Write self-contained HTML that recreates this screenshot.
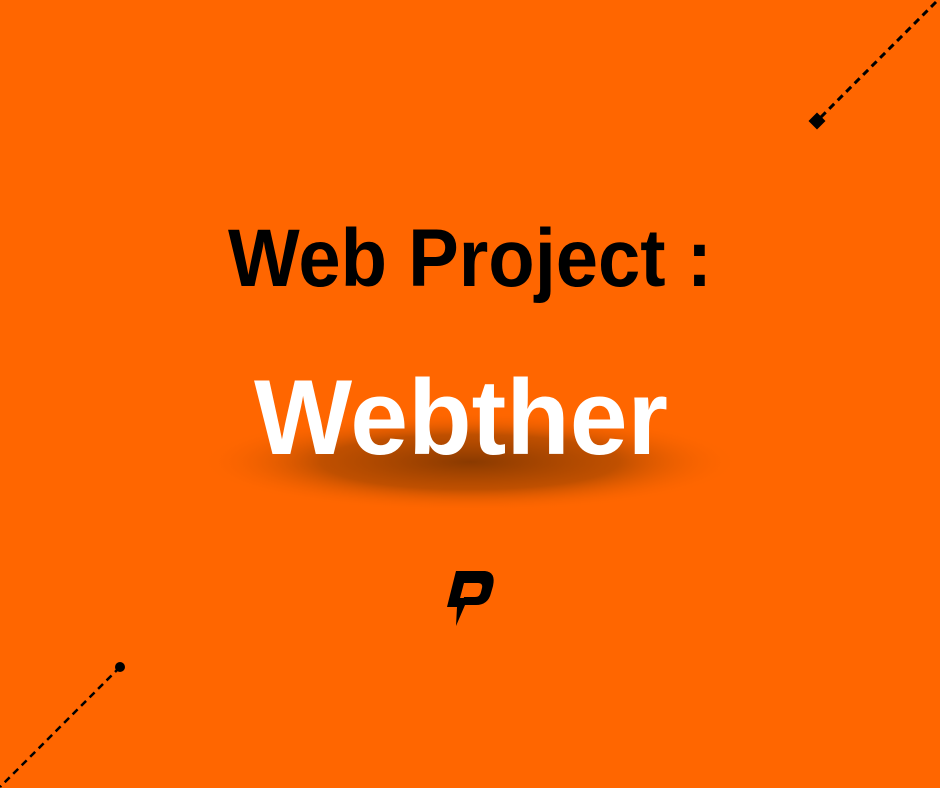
<!DOCTYPE html>
<html><head><style>
html,body{margin:0;padding:0;background:#ff6600;}
svg{display:block}
</style></head><body>
<svg width="940" height="788" viewBox="0 0 940 788">
<defs>
<radialGradient id="sh" cx="50%" cy="50%" r="50%">
<stop offset="0" stop-color="#8a3a00" stop-opacity="1"/>
<stop offset="0.55" stop-color="#b04a00" stop-opacity="0.8"/>
<stop offset="1" stop-color="#ff6600" stop-opacity="0"/>
</radialGradient>
</defs>
<rect width="940" height="788" fill="#ff6600"/>
<ellipse cx="470" cy="462" rx="270" ry="50" fill="url(#sh)"/>
<line x1="936" y1="2" x2="817" y2="121" stroke="#000" stroke-width="3" stroke-dasharray="7,5"/>
<rect x="811" y="115" width="12" height="12" transform="rotate(45 817 121)" fill="#000"/>
<line x1="120" y1="667" x2="0" y2="787" stroke="#000" stroke-width="2.5" stroke-dasharray="7,5"/>
<circle cx="120" cy="667" r="5" fill="#000"/>
<text x="228" y="286" textLength="484" lengthAdjust="spacingAndGlyphs" font-family="Liberation Sans, sans-serif" font-weight="bold" font-size="82" fill="#000">Web Project :</text>
<text x="254" y="454" textLength="414" lengthAdjust="spacingAndGlyphs" font-family="Liberation Sans, sans-serif" font-weight="bold" font-size="107" fill="#fff">Webther</text>
<path d="M456 571 L485 571 Q496 572 493 586 L491 593 Q488 605 476 605 L462 605 L464 597 L475 597 Q480 597 481 592 L482 588 Q483 583 478 583 L464 583 L460 598 L468 598 L456 626 L457 607 L447 607 Z" fill="#000"/>
</svg>
</body></html>
